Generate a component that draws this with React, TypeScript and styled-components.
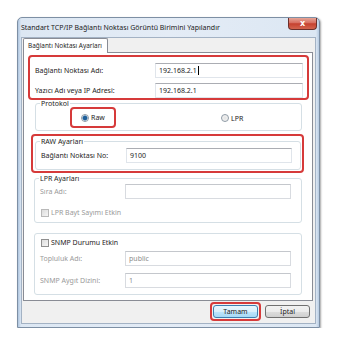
import styled, { createGlobalStyle } from 'styled-components';

const GlobalStyle = createGlobalStyle`
  html, body { margin: 0; padding: 0; background: #fff; }
  body {
    font-family: "Noto Sans", "Open Sans", sans-serif;
    font-size: 7px;
    line-height: 9px;
    color: #1e1e1e;
  }
  * { box-sizing: border-box; }
`;

const Window = styled.div`
  margin: 17px 0 0 17px;
  width: 303px;
  height: 311px;
  border: 1px solid #7d8fa4;
  border-radius: 5px 5px 0 0;
  background: linear-gradient(90deg, #aec5df 0, #dce7f3 3px, #e4ecf6 50%, #dce7f3 calc(100% - 3px), #b7cbe2 100%);
  box-shadow: 1px 1px 2px rgba(0, 0, 0, 0.35);
  display: flex;
  flex-direction: column;
`;

const TitleBar = styled.div`
  height: 19px;
  display: flex;
  align-items: flex-start;
  padding-left: 3px;
`;

const Title = styled.span`
  margin-top: 5px;
  color: #1b1b1b;
  white-space: nowrap;
`;

const CloseButton = styled.div`
  margin-left: auto;
  margin-right: 2px;
  width: 29px;
  height: 12px;
  border: 1px solid #6b2f2a;
  border-top: none;
  border-radius: 0 0 4px 4px;
  background: linear-gradient(180deg, #e6a597 0%, #d76c5e 45%, #c5412f 52%, #d3644e 100%);
  color: #fff;
  font-family: "DejaVu Sans", sans-serif;
  font-weight: bold;
  font-size: 8px;
  line-height: 11px;
  text-align: center;
`;

const Client = styled.div`
  flex: 1;
  margin: 0 3px 3px;
  background: #f0f0f0;
  border: 1px solid #a3b2c4;
  padding: 0 2px 0 1px;
  display: flex;
  flex-direction: column;
`;

const Tab = styled.div`
  position: relative;
  z-index: 1;
  align-self: flex-start;
  height: 15px;
  margin-bottom: -1px;
  border: 1px solid #898c95;
  border-bottom: none;
  border-radius: 2px 2px 0 0;
  background: #fff;
  padding: 3px 5px 0 4px;
  font-size: 6.4px;
  line-height: 8px;
  white-space: nowrap;
`;

const Panel = styled.div`
  width: 290px;
  height: 249px;
  border: 1px solid #898c95;
  background: #fff;
  display: flex;
  flex-direction: column;
`;

const RedBox = styled.div<{ $top: number; $left: number; $width: number; $height?: number }>`
  margin-top: ${({ $top }) => $top}px;
  margin-left: ${({ $left }) => $left}px;
  width: ${({ $width }) => $width}px;
  ${({ $height }) => ($height ? `height: ${$height}px;` : '')}
  border: 2px solid #d63a3a;
  border-radius: 4px;
`;

const PortBox = styled(RedBox)`
  padding: 5px 4px 0 5px;
  display: grid;
  grid-template-columns: 120px 148px;
  row-gap: 4px;
  align-items: center;
`;

const Group = styled.fieldset<{ $top: number; $left: number; $width: number }>`
  margin: ${({ $top }) => $top}px 0 0 ${({ $left }) => $left}px;
  width: ${({ $width }) => $width}px;
  border: 1px solid #d5dfe5;
  border-radius: 3px;
  padding: 0 8px 0 5px;
  min-width: 0;
`;

const Legend = styled.legend`
  padding: 0 1px;
  margin-left: -1px;
  line-height: 9px;
  color: #1e1e1e;
`;

const FormGrid = styled.div<{ $top: number; $gap?: number }>`
  margin-top: ${({ $top }) => $top}px;
  display: grid;
  grid-template-columns: 85px 166px;
  row-gap: ${({ $gap }) => $gap ?? 0}px;
  align-items: center;
`;

const Label = styled.span<{ $disabled?: boolean }>`
  white-space: nowrap;
  color: ${({ $disabled }) => ($disabled ? '#9a9a9a' : '#1e1e1e')};
`;

const TextBox = styled.div<{ $disabled?: boolean }>`
  height: 15px;
  border: 1px solid ${({ $disabled }) => ($disabled ? '#d8dbe0' : '#e0e5eb')};
  border-top-color: ${({ $disabled }) => ($disabled ? '#c4c7cc' : '#abadb3')};
  background: #fff;
  padding: 2px 0 0 3px;
  white-space: nowrap;
  color: ${({ $disabled }) => ($disabled ? '#8c8c8c' : '#1e1e1e')};
`;

const Caret = styled.span`
  display: inline-block;
  width: 1px;
  height: 9px;
  margin-left: 1px;
  vertical-align: top;
  background: #000;
`;

const RadioRow = styled.div`
  display: flex;
  align-items: center;
  padding-bottom: 2px;
`;

const RawBox = styled(RedBox)`
  display: flex;
  align-items: center;
  justify-content: center;
`;

const Option = styled.label<{ $left?: number }>`
  display: flex;
  align-items: center;
  gap: 2px;
  margin-left: ${({ $left }) => $left ?? 0}px;
`;

const Radio = styled.span<{ $checked?: boolean }>`
  width: 8px;
  height: 8px;
  border-radius: 50%;
  border: 1px solid #8e9aa5;
  background: ${({ $checked }) =>
    $checked
      ? 'radial-gradient(circle, #1f5f99 0 1.8px, #5d94c7 2.4px, #e9eef2 2.8px, #f9f9f9 100%)'
      : 'radial-gradient(circle, #e2e2e2 0, #fafafa 100%)'};
`;

const Check = styled.span<{ $disabled?: boolean }>`
  width: 8px;
  height: 8px;
  border: 1px solid ${({ $disabled }) => ($disabled ? '#b9b9b9' : '#8f8f8f')};
  background: linear-gradient(135deg, #dcdcdc 0%, #f6f6f6 100%);
`;

const CheckRow = styled(Option)<{ $top: number }>`
  margin-top: ${({ $top }) => $top}px;
  margin-left: 1px;
`;

const RawInner = styled(Group)`
  padding: 0 9px 6px 5px;
`;

const ButtonRow = styled.div`
  margin-top: 1px;
  display: flex;
  align-items: center;
  justify-content: flex-end;
  gap: 4px;
  padding-right: 3px;
`;

const Button = styled.div<{ $primary?: boolean }>`
  width: 45px;
  height: 13px;
  border-radius: 3px;
  border: 1px solid ${({ $primary }) => ($primary ? '#3c7fb1' : '#707070')};
  background: ${({ $primary }) =>
    $primary
      ? 'linear-gradient(180deg, #eaf6fd 0%, #d9f0fc 50%, #bee6fd 51%, #a7d9f5 100%)'
      : 'linear-gradient(180deg, #f2f2f2 0%, #ebebeb 50%, #dddddd 51%, #cfcfcf 100%)'};
  text-align: center;
  line-height: 11px;
`;

const ButtonFrame = styled.div`
  padding: 1px;
  border: 2px solid #d63a3a;
  border-radius: 4px;
`;

export default function App() {
  return (
    <>
      <GlobalStyle />
      <Window>
        <TitleBar>
          <Title>Standart TCP/IP Bağlantı Noktası Görüntü Birimini Yapılandır</Title>
          <CloseButton>x</CloseButton>
        </TitleBar>
        <Client>
          <Tab>Bağlantı Noktası Ayarları</Tab>
          <Panel>
            <PortBox $top={2} $left={4} $width={281} $height={45}>
              <Label>Bağlantı Noktası Adı:</Label>
              <TextBox>
                192.168.2.1
                <Caret />
              </TextBox>
              <Label>Yazıcı Adı veya IP Adresi:</Label>
              <TextBox>192.168.2.1</TextBox>
            </PortBox>

            <Group $top={-1} $left={11} $width={267}>
              <Legend>Protokol</Legend>
              <RadioRow>
                <RawBox $top={-1} $left={29} $width={46} $height={21}>
                  <Option>
                    <Radio $checked />
                    Raw
                  </Option>
                </RawBox>
                <Option $left={105}>
                  <Radio />
                  LPR
                </Option>
              </RadioRow>
            </Group>

            <RedBox $top={3} $left={7} $width={273} $height={39}>
              <RawInner as="fieldset" $top={1} $left={2} $width={266}>
                <Legend>RAW Ayarları</Legend>
                <FormGrid $top={2}>
                  <Label>Bağlantı Noktası No:</Label>
                  <TextBox>9100</TextBox>
                </FormGrid>
              </RawInner>
            </RedBox>

            <Group $top={1} $left={10} $width={268} style={{ paddingBottom: 5 }}>
              <Legend>LPR Ayarları</Legend>
              <FormGrid $top={1}>
                <Label $disabled>Sıra Adı:</Label>
                <TextBox $disabled />
              </FormGrid>
              <CheckRow $top={9}>
                <Check $disabled />
                <Label $disabled>LPR Bayt Sayımı Etkin</Label>
              </CheckRow>
            </Group>

            <Group $top={10} $left={10} $width={268} style={{ paddingTop: 4, paddingBottom: 6 }}>
              <CheckRow $top={0}>
                <Check />
                <Label>SNMP Durumu Etkin</Label>
              </CheckRow>
              <FormGrid $top={4} $gap={7}>
                <Label $disabled>Topluluk Adı:</Label>
                <TextBox $disabled>public</TextBox>
                <Label $disabled>SNMP Aygıt Dizini:</Label>
                <TextBox $disabled>1</TextBox>
              </FormGrid>
            </Group>
          </Panel>
          <ButtonRow>
            <ButtonFrame>
              <Button $primary>Tamam</Button>
            </ButtonFrame>
            <Button>İptal</Button>
          </ButtonRow>
        </Client>
      </Window>
    </>
  );
}
